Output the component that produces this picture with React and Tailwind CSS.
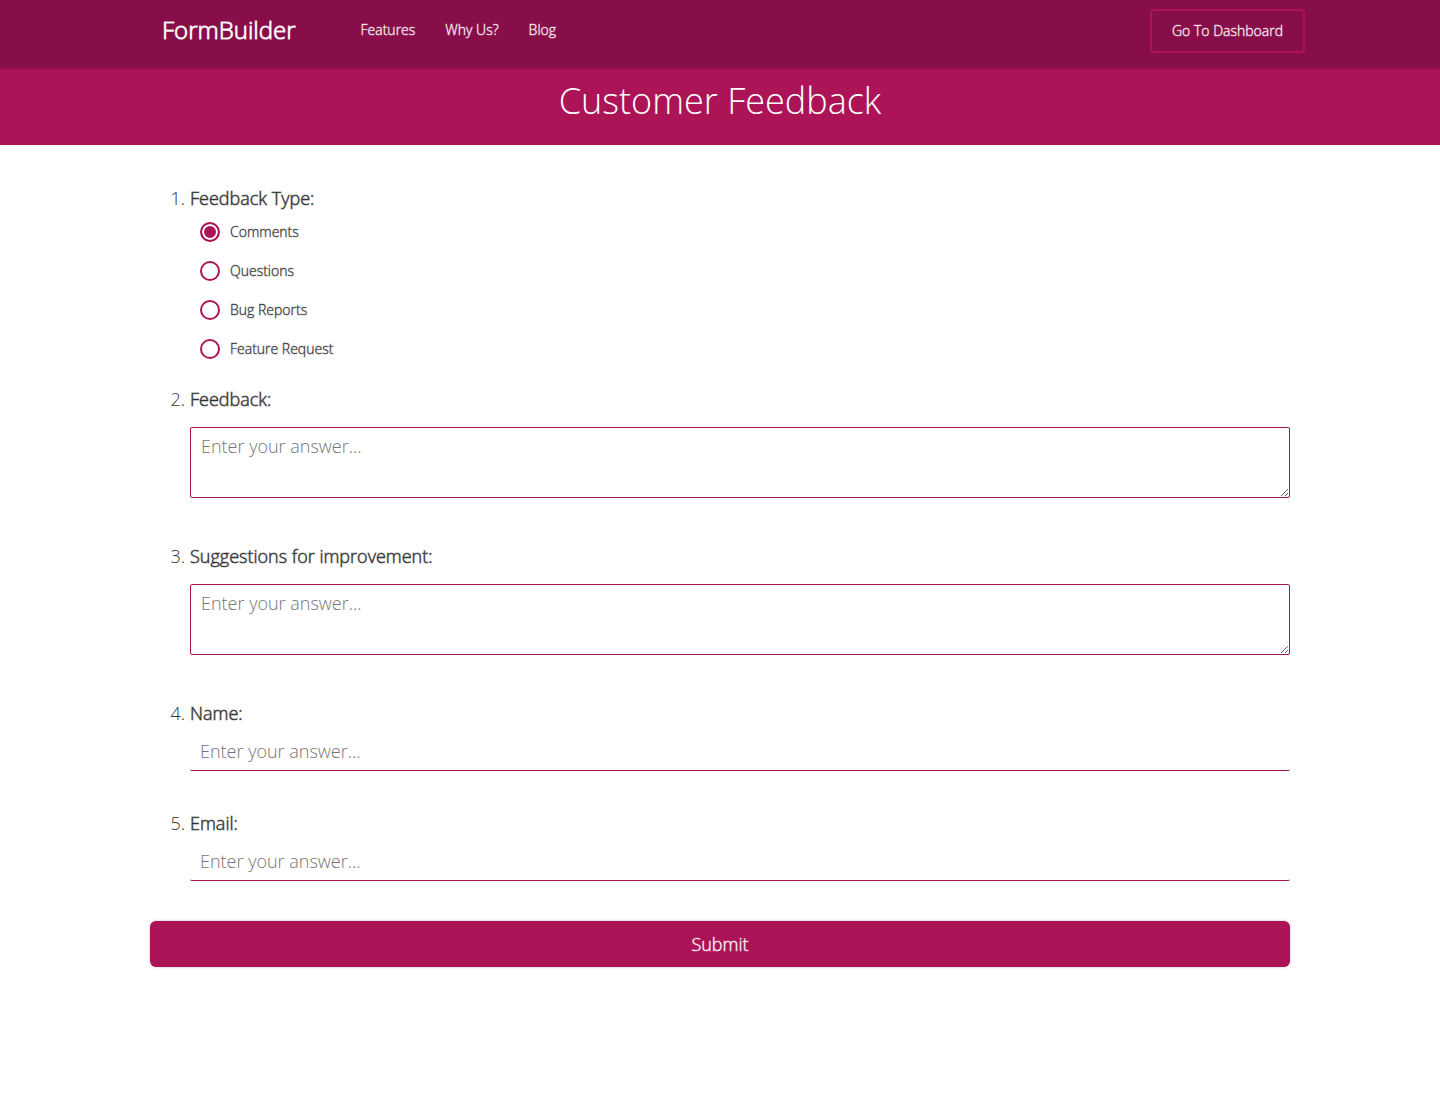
const feedbackTypes = ["Comments", "Questions", "Bug Reports", "Feature Request"];

const strong = "[-webkit-text-stroke:1px_#33333380]";
const strongLight = "[-webkit-text-stroke:1px_#ffffff59]";

function Question({ number, label, id, className, children }) {
  return (
    <li className={`flex ${className}`}>
      <span className="w-[35px] shrink-0 text-right">{number}.</span>
      <div className="ml-[5px] min-w-0 flex-1">
        <label htmlFor={id} className={`block ${strong}`}>{label}</label>
        {children}
      </div>
    </li>
  );
}

function LongAnswer({ id }) {
  return (
    <textarea
      id={id}
      placeholder="Enter your answer..."
      className="mt-[15px] block h-[71px] w-full resize rounded-xs border border-[#ad1457] px-2.5 py-[5px] placeholder:text-[#757575] focus:outline-none"
    />
  );
}

function ShortAnswer({ id, type }) {
  return (
    <input
      id={id}
      type={type}
      placeholder="Enter your answer..."
      className="mt-[5px] block h-10 w-full rounded-xs border-b border-[#ad1457] px-2.5 placeholder:text-[#757575] focus:outline-none"
    />
  );
}

export default function App() {
  return (
    <div className="min-h-screen bg-white font-['Open_Sans',sans-serif] font-light text-[#333]">
      <header className="relative h-[68px] bg-[#880e4a] text-white shadow-[0_1px_3px_#00000033]">
        <div className="mx-auto flex max-w-[1170px] items-start pl-[27px]">
          <a href="#" className="mt-[13px] text-2xl leading-[34px] [-webkit-text-stroke:1px_#ffffffcc]">FormBuilder</a>
          <nav className={`mt-5 ml-[65px] flex gap-[30px] text-sm leading-5 ${strongLight}`}>
            <a href="#">Features</a>
            <a href="#">Why Us?</a>
            <a href="#">Blog</a>
          </nav>
          <button className={`mt-[9px] ml-auto h-11 rounded-sm border-2 border-[#ad1457] px-5 text-sm ${strongLight}`}>
            Go To Dashboard
          </button>
        </div>
      </header>
      <div className="h-[77px] bg-[#ad1457] pt-2 text-center text-white">
        <h1 className="text-4xl leading-[50px]">Customer Feedback</h1>
      </div>
      <main className="mx-auto max-w-[1140px] pt-10">
        <form onSubmit={(e) => e.preventDefault()}>
          <ol className="text-lg leading-[26px]">
            <li className="mb-[27px] flex">
              <span className="w-[35px] shrink-0 text-right">1.</span>
              <div className="ml-[5px]" role="radiogroup" aria-labelledby="type-label">
                <p id="type-label" className={strong}>Feedback Type:</p>
                <div className="mt-[11px] ml-2.5 flex flex-col gap-[19px]">
                  {feedbackTypes.map((type, i) => (
                    <label key={type} className="flex h-5 items-center gap-2.5 text-sm [-webkit-text-stroke:1px_#33333359]">
                      <input
                        type="radio"
                        name="type"
                        defaultChecked={i === 0}
                        className="size-5 appearance-none rounded-full border-2 border-[#ad1457] checked:bg-[#ad1457] checked:shadow-[inset_0_0_0_2px_#fff]"
                      />
                      {type}
                    </label>
                  ))}
                </div>
              </div>
            </li>
            <Question number={2} label="Feedback:" id="feedback" className="mb-[45px]">
              <LongAnswer id="feedback" />
            </Question>
            <Question number={3} label="Suggestions for improvement:" id="suggestions" className="mb-[45px]">
              <LongAnswer id="suggestions" />
            </Question>
            <Question number={4} label="Name:" id="name" className="mb-[39px]">
              <ShortAnswer id="name" type="text" />
            </Question>
            <Question number={5} label="Email:" id="email" className="mb-10">
              <ShortAnswer id="email" type="email" />
            </Question>
          </ol>
          <button
            type="submit"
            className={`block h-[46px] w-full rounded-md bg-[#ad1457] text-lg text-white shadow-[0_0_3px_#00000040] ${strongLight}`}
          >
            Submit
          </button>
        </form>
      </main>
    </div>
  );
}
